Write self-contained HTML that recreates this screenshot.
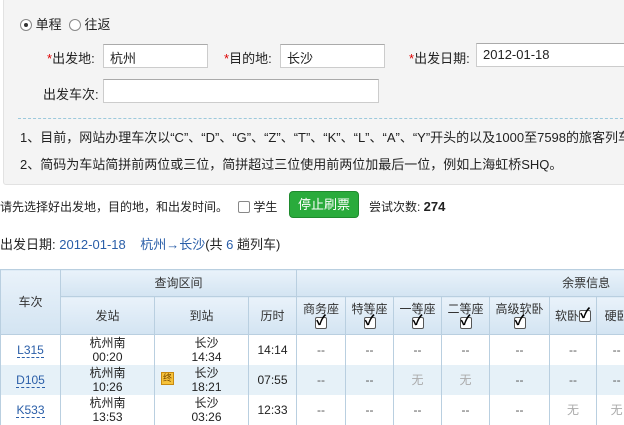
<!DOCTYPE html>
<html><head><meta charset="utf-8"><style>
*{margin:0;padding:0;box-sizing:border-box}
body{width:624px;height:416px;overflow:hidden;background:#fff;font-family:"Liberation Sans","Noto Sans CJK SC",sans-serif;font-size:12px;color:#222;position:relative}
.a{position:absolute;white-space:nowrap}
.panel{position:absolute;left:3px;top:-2px;width:640px;height:187px;background:#f4f4f4;border:1px solid #e2e2e2;border-radius:3px}
.inp{position:absolute;background:#fff;border:1px solid #ccc;border-top-color:#aaa;height:24px;padding:3px 6px;font-size:13px}
.star{color:#d00}
.radio{display:inline-block;width:12px;height:12px;border:1px solid #888;border-radius:50%;vertical-align:-2px;background:#fff;position:relative}
.radio.on::after{content:"";position:absolute;left:3px;top:3px;width:4px;height:4px;border-radius:50%;background:#333}
.blue{color:#2a5ea8}
table{position:absolute;left:0;top:269px;border-collapse:collapse;table-layout:fixed;width:636px}
td,th{border:1px solid #b9cfe0;text-align:center;font-weight:normal;font-size:12px;line-height:14px}
th{background:linear-gradient(#e9f2fa,#d3e4f2);color:#333}
td{border-top:none;border-bottom:none}
tr.alt td{background:#e6f1f8}
.cb{display:inline-block;width:12px;height:12px;border:1px solid #555;border-radius:2px;background:#fff;position:relative;vertical-align:-2px}
.cb::after{content:"✓";position:absolute;left:0;top:-5px;font-size:14px;font-weight:bold;color:#000}
.cb.n::after{content:none}
.d{color:#555}
.w{color:#aaa}
a{color:#2a5ea8;text-decoration:none;border-bottom:1px dashed #2a5ea8}
</style></head><body>
<div class="panel"></div>
<div class="a" style="left:20px;top:14px;font-size:13px"><span class="radio on"></span> 单程 &nbsp;<span class="radio"></span> 往返</div>
<div class="a" style="left:47px;top:48px;font-size:13px"><span class="star">*</span>出发地:</div>
<div class="inp" style="left:103px;top:44px;width:105px">杭州</div>
<div class="a" style="left:224px;top:48px;font-size:13px"><span class="star">*</span>目的地:</div>
<div class="inp" style="left:280px;top:44px;width:105px">长沙</div>
<div class="a" style="left:409px;top:48px;font-size:13px"><span class="star">*</span>出发日期:</div>
<div class="inp" style="left:476px;top:43px;width:160px">2012-01-18</div>
<div class="a" style="left:43px;top:84px;font-size:13px">出发车次:</div>
<div class="inp" style="left:103px;top:79px;width:276px"></div>
<div class="a" style="left:18px;top:118px;width:620px;border-top:1px dashed #9cc9dc"></div>
<div class="a" style="left:20px;top:127px;font-size:13px">1、目前，网站办理车次以“C”、“D”、“G”、“Z”、“T”、“K”、“L”、“A”、“Y”开头的以及1000至7598的旅客列车</div>
<div class="a" style="left:20px;top:154px;font-size:13px">2、简码为车站简拼前两位或三位，简拼超过三位使用前两位加最后一位，例如上海虹桥SHQ。</div>
<div class="a" style="left:0;top:198px">请先选择好出发地，目的地，和出发时间。 &nbsp;&nbsp;<span class="cb n" style="border-color:#888"></span> 学生</div>
<div class="a" style="left:289px;top:191px;width:70px;height:27px;background:#2aab3c;border:1px solid #1f8a2e;border-radius:4px;color:#fff;font-size:13px;line-height:25px;text-align:center">停止刷票</div>
<div class="a" style="left:369px;top:198px">尝试次数: <b style="font-size:13px">274</b></div>
<div class="a" style="left:0;top:234px;font-size:13px">出发日期: <span class="blue">2012-01-18</span> &nbsp;&nbsp; <span class="blue">杭州→长沙</span>(共 <span class="blue">6</span> 趟列车)</div>
<table>
<colgroup><col style="width:60px"><col style="width:94px"><col style="width:94px"><col style="width:48px"><col style="width:49px"><col style="width:48px"><col style="width:48px"><col style="width:48px"><col style="width:60px"><col style="width:47px"><col style="width:40px"></colgroup>
<tr style="height:27px"><th rowspan="2">车次</th><th colspan="3">查询区间</th><th colspan="7" style="text-align:right;padding-right:26px">余票信息</th></tr>
<tr style="height:38px"><th>发站</th><th>到站</th><th>历时</th><th>商务座<br><span class="cb"></span></th><th>特等座<br><span class="cb"></span></th><th>一等座<br><span class="cb"></span></th><th>二等座<br><span class="cb"></span></th><th>高级软卧<br><span class="cb"></span></th><th>软卧<span class="cb"></span></th><th>硬卧</th></tr>
<tr style="height:30px"><td><a>L315</a></td><td>杭州南<br>00:20</td><td>&nbsp;&nbsp;&nbsp;长沙<br>&nbsp;&nbsp;&nbsp;14:34</td><td>14:14</td><td class="d">--</td><td class="d">--</td><td class="d">--</td><td class="d">--</td><td class="d">--</td><td class="d">--</td><td class="d">--</td></tr>
<tr class="alt" style="height:30px"><td><a>D105</a></td><td>杭州南<br>10:26</td><td style="position:relative"><span style="position:absolute;left:6px;top:7px;width:13px;height:13px;background:#f6c23a;border:1px solid #c88a10;font-size:9px;line-height:11px;color:#7a4a00">终</span>&nbsp;&nbsp;&nbsp;长沙<br>&nbsp;&nbsp;&nbsp;18:21</td><td>07:55</td><td class="d">--</td><td class="d">--</td><td class="w">无</td><td class="w">无</td><td class="d">--</td><td class="d">--</td><td class="d">--</td></tr>
<tr style="height:30px"><td><a>K533</a></td><td>杭州南<br>13:53</td><td>&nbsp;&nbsp;&nbsp;长沙<br>&nbsp;&nbsp;&nbsp;03:26</td><td>12:33</td><td class="d">--</td><td class="d">--</td><td class="d">--</td><td class="d">--</td><td class="d">--</td><td class="w">无</td><td class="w">无</td></tr>
</table>
</body></html>
